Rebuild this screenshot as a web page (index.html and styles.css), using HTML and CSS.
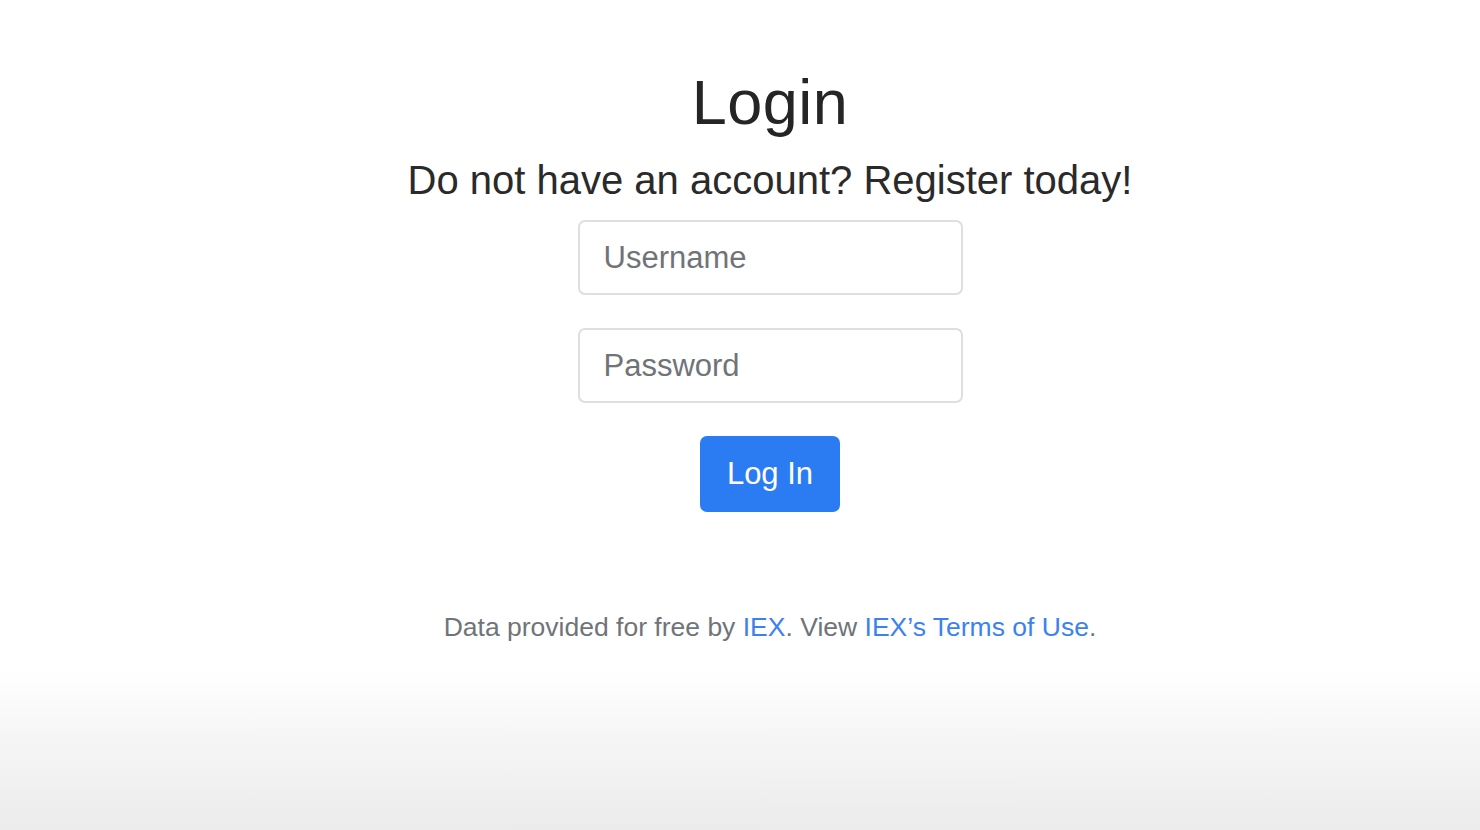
FILE: index.html
```html
<!DOCTYPE html>
<html lang="en">
<head>
<meta charset="utf-8">
<title>Login</title>
<link rel="stylesheet" href="styles.css">
</head>
<body>
<div class="page">
  <main class="content">
    <h1 class="title">Login</h1>
    <h2 class="subtitle">Do not have an account? Register today!</h2>
    <form class="form">
      <input class="field" type="text" placeholder="Username">
      <input class="field" type="password" placeholder="Password">
      <button class="btn" type="button">Log In</button>
    </form>
    <footer class="credits">Data provided for free by <a href="#">IEX</a>. View <a href="#">IEX’s Terms of Use</a>.</footer>
  </main>
  <div class="fade"></div>
</div>
</body>
</html>
```
FILE: styles.css
```css
html, body {
  margin: 0;
  padding: 0;
  height: 100%;
  background: #ffffff;
}
body {
  font-family: "Liberation Sans", Arial, sans-serif;
  color: #252525;
}
.page {
  display: flex;
  flex-direction: column;
  height: 830px;
  overflow: hidden;
}
.content {
  flex: 1;
  display: flex;
  flex-direction: column;
  align-items: center;
  padding-left: 60px;
  padding-top: 71px;
}
.title {
  margin: 0;
  font-size: 63px;
  font-weight: 400;
  line-height: 1;
  color: #252525;
  letter-spacing: 0.5px;
}
.subtitle {
  margin: 22px 0 0;
  font-size: 40px;
  font-weight: 400;
  line-height: 1.2;
  color: #2a2a2a;
}
.form {
  display: flex;
  flex-direction: column;
  align-items: center;
  margin-top: 16px;
}
.field {
  box-sizing: border-box;
  width: 385px;
  height: 75px;
  padding: 0 24px;
  margin-bottom: 33px;
  border: 2px solid #dcdfe3;
  border-radius: 7px;
  font-family: inherit;
  font-size: 31px;
  color: #495057;
  background: #fff;
  outline: none;
}
.field::placeholder {
  color: #707478;
}
.btn {
  box-sizing: border-box;
  width: 140px;
  height: 76px;
  margin-top: 0;
  border: none;
  border-radius: 7px;
  background: #2b7cf3;
  color: #fff;
  font-family: inherit;
  font-size: 31px;
  cursor: pointer;
}
.credits {
  margin-top: 100px;
  font-size: 26.5px;
  color: #6f7479;
}
.credits a {
  color: #3b82ef;
  text-decoration: none;
}
.fade {
  height: 160px;
  background: linear-gradient(to bottom, #ffffff 0%, #f5f5f5 45%, #ebebeb 100%);
  flex-shrink: 0;
}
```
